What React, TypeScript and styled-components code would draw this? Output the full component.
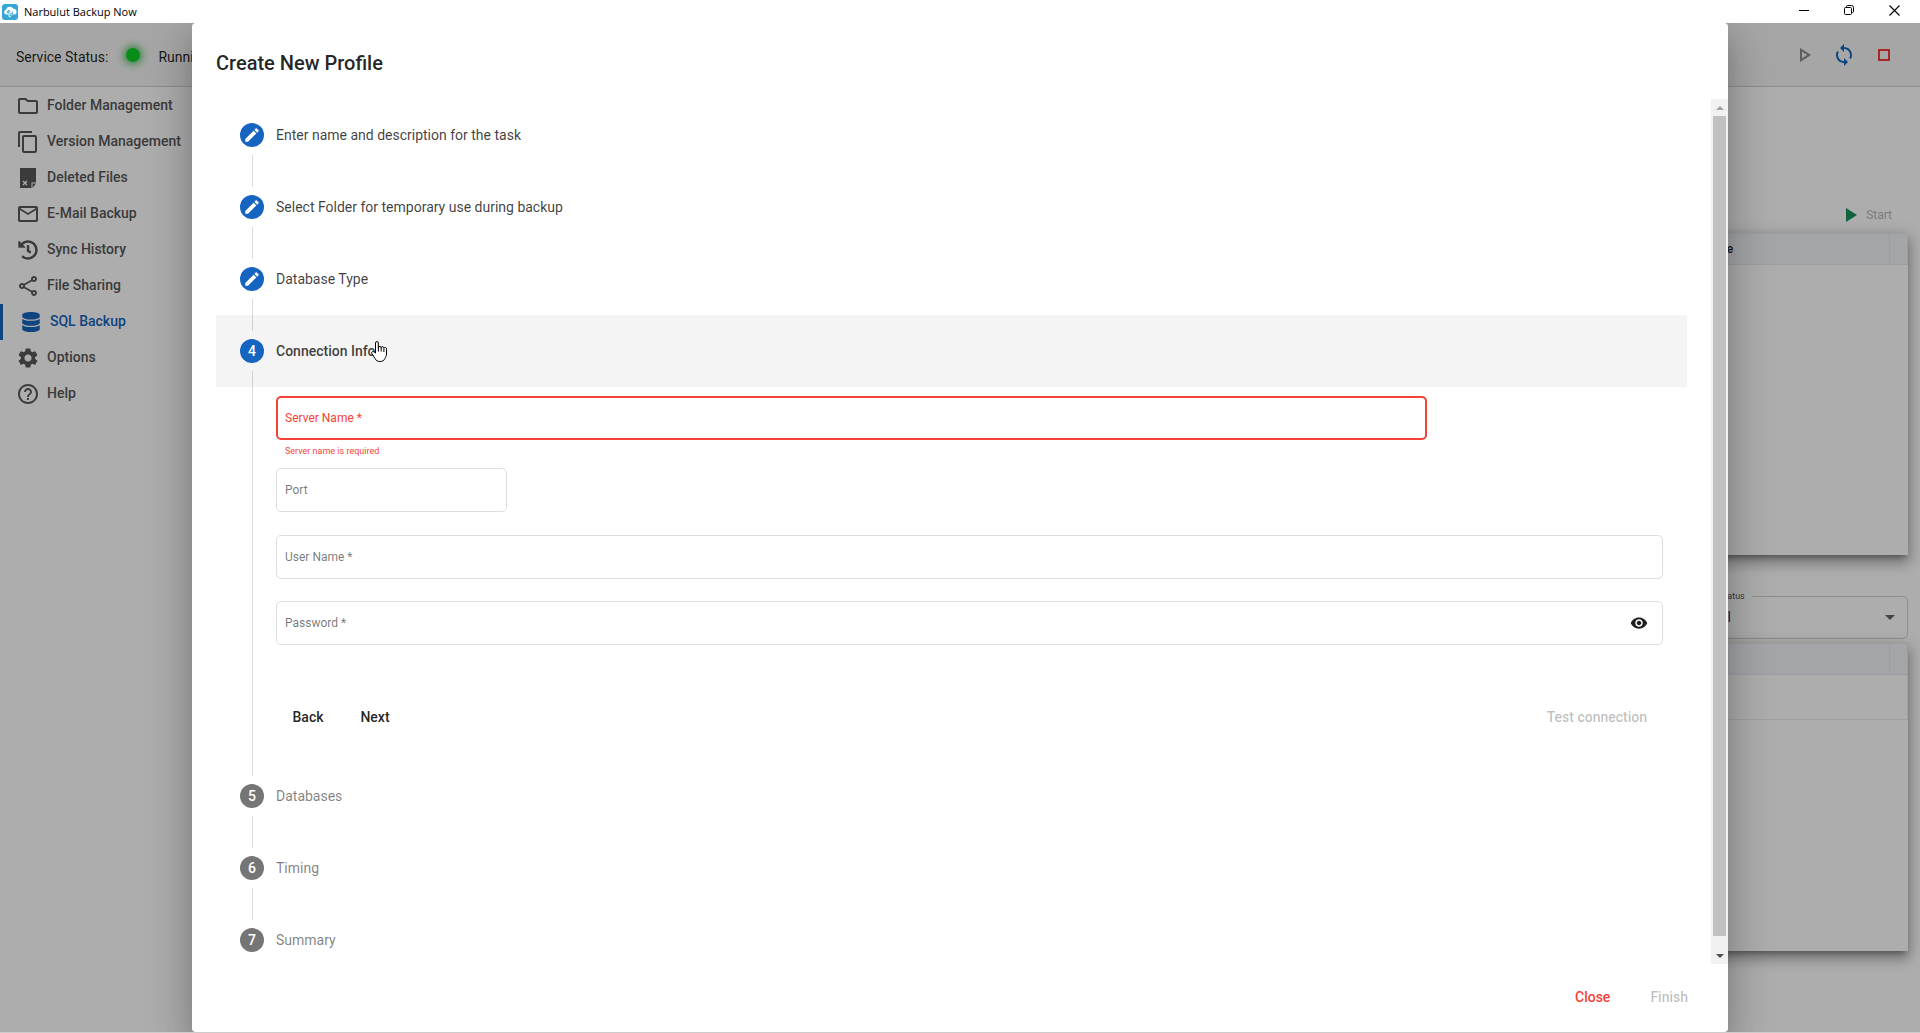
import React from "react";
import styled, { createGlobalStyle, css } from "styled-components";
import {
  MdContentCopy,
  MdEdit,
  MdHelpOutline,
  MdMailOutline,
  MdOutlineFolder,
  MdOutlinePlayArrow,
  MdOutlineShare,
  MdOutlineStop,
  MdPlayArrow,
  MdSettings,
  MdSync,
  MdVisibility,
} from "react-icons/md";
import { FaDatabase, FaHistory } from "react-icons/fa";

const blue = "#1565c0";
const red = "#f44336";

const GlobalStyle = createGlobalStyle`
  *, *::before, *::after { box-sizing: border-box; }
  body {
    margin: 0;
    font-family: Roboto, "Liberation Sans", sans-serif;
    font-size: 14px;
    line-height: 20px;
    color: rgba(0, 0, 0, 0.87);
    background: #fff;
  }
  button, input, select { font: inherit; color: inherit; }
  button { border: 0; background: none; padding: 0; }
  svg { display: block; flex: none; }
`;

/* ---------- window ---------- */

const Window = styled.div`
  height: 100vh;
  display: flex;
  flex-direction: column;
  overflow: hidden;
  border-bottom: 1px solid #ccc;
`;

const TitleBar = styled.header`
  height: 23px;
  flex: none;
  display: flex;
  align-items: center;
  justify-content: space-between;
  padding: 0 20px 0 2px;
  color: #000;
`;

const AppName = styled.div`
  display: flex;
  align-items: center;
  gap: 6px;
  font: 11px/16px "Open Sans", "Noto Sans", sans-serif;
`;

const WindowButtons = styled.div`
  display: flex;
  gap: 34px;
  padding-bottom: 3px;
`;

const WindowButton = styled.button`
  display: flex;
`;

const Workspace = styled.div`
  position: relative;
  flex: 1;
  min-height: 0;
  display: flex;
  flex-direction: column;
`;

/* ---------- app behind the dialog ---------- */

const StatusBar = styled.div`
  height: 64px;
  flex: none;
  display: flex;
  align-items: center;
  justify-content: space-between;
  padding: 0 24px 0 16px;
  background: #f5f5f5;
  border-bottom: 1px solid #d0d0d0;
`;

const ServiceStatus = styled.div`
  display: flex;
  align-items: center;
  gap: 18px;
  padding-top: 4px;
`;

const StatusDot = styled.span`
  width: 14px;
  height: 14px;
  margin-bottom: 4px;
  border-radius: 50%;
  background: #0cd024;
  box-shadow: 0 0 8px 2px #3fb850;
`;

const ServiceActions = styled.div`
  display: flex;
  gap: 16px;
`;

const ServiceButton = styled.button<{ $color: string }>`
  display: flex;
  color: ${(p) => p.$color};
`;

const Body = styled.div`
  flex: 1;
  min-height: 0;
  display: flex;
`;

const Sidebar = styled.nav`
  width: 200px;
  flex: none;
  padding-top: 1px;
`;

const NavItem = styled.a<{ $active?: boolean }>`
  height: 36px;
  display: flex;
  align-items: center;
  gap: 7px;
  padding-left: 16px;
  color: #585858;
  font-weight: 500;
  text-decoration: none;
  ${(p) =>
    p.$active &&
    css`
      color: ${blue};
      border-left: 3px solid ${blue};
    `}
`;

const NavIcon = styled.span`
  width: 24px;
  display: flex;
  justify-content: center;
`;

const NavLabel = styled.span`
  padding-bottom: 2px;
`;

const Main = styled.main`
  flex: 1;
  min-width: 0;
  display: flex;
  flex-direction: column;
  padding: 116px 12px 81px;
`;

const Actions = styled.div`
  display: flex;
  justify-content: flex-end;
  padding: 0 16px 6px 0;
`;

const StartButton = styled.button`
  height: 24px;
  display: flex;
  align-items: center;
  gap: 4px;
  color: #b8b8b8;
  font-size: 12px;
  svg { color: #18925e; }
`;

const Panel = styled.section<{ $grow: number }>`
  flex: ${(p) => p.$grow} 1 0;
  box-shadow: 0 5px 5px -3px rgba(0, 0, 0, 0.3), 0 8px 12px 1px rgba(0, 0, 0, 0.22),
    0 3px 14px 2px rgba(0, 0, 0, 0.16);
  background: #fff;
`;

const PanelTable = styled.table`
  width: 100%;
  border-collapse: collapse;
  table-layout: fixed;
  font-size: 12px;
  th {
    height: 31px;
    padding: 0 8px;
    text-align: left;
    font-weight: 500;
    background: #f0f3fa;
    border: 1px solid #e6e8ee;
  }
  td {
    height: 45px;
    border: 1px solid #ececec;
  }
  col:nth-child(2) { width: 193px; }
  col:nth-child(3) { width: 18px; }
`;

const StatusFilter = styled.fieldset`
  width: 206px;
  height: 48px;
  margin: 36px 0 4px auto;
  padding: 6px 12px 0;
  display: flex;
  align-items: center;
  border: 1px solid #d2d2d2;
  border-radius: 5px;
  legend {
    padding: 0 7px 0 4px;
    font-size: 9px;
    line-height: 10px;
    color: #555;
  }
  select {
    flex: 1;
    border: 0;
    appearance: none;
    background: none;
    color: #26408c;
    padding: 0;
  }
`;

/* ---------- dialog ---------- */

const Backdrop = styled.div`
  position: absolute;
  inset: 0;
  display: flex;
  justify-content: center;
  overflow: hidden;
  background: rgba(0, 0, 0, 0.32);
`;

const Dialog = styled.section`
  width: 80%;
  height: 100%;
  display: flex;
  flex-direction: column;
  border-radius: 4px;
  background: #fff;
  box-shadow: 0 11px 15px -7px rgba(0, 0, 0, 0.2), 0 24px 38px 3px rgba(0, 0, 0, 0.14),
    0 9px 46px 8px rgba(0, 0, 0, 0.12);
`;

const DialogTitle = styled.h1`
  margin: 0;
  padding: 24px 24px 20px;
  font-size: 20px;
  line-height: 32px;
  font-weight: 500;
`;

const DialogContent = styled.div`
  flex: 1;
  min-height: 0;
  display: flex;
`;

const Stepper = styled.div`
  flex: 1;
  min-width: 0;
  overflow-y: auto;
  scrollbar-width: none;
  padding: 0 24px;
`;

const ScrollTrack = styled.div`
  width: 17px;
  flex: none;
  display: flex;
  flex-direction: column;
  align-items: center;
  background: #f1f1f1;
`;

const ScrollArrow = styled.button`
  width: 17px;
  height: 17px;
  display: grid;
  place-items: center;
`;

const ScrollThumb = styled.div`
  width: 13px;
  flex: 1;
  margin-bottom: 11px;
  background: #c1c1c1;
`;

const StepHeader = styled.button<{ $state: StepState }>`
  width: 100%;
  height: 72px;
  display: flex;
  align-items: center;
  gap: 12px;
  padding: 0 24px;
  text-align: left;
  color: ${(p) => (p.$state === "todo" ? "rgba(0,0,0,0.5)" : "rgba(0,0,0,0.76)")};
  ${(p) =>
    p.$state === "current" &&
    css`
      font-weight: 500;
      background: #f4f4f4;
    `}
`;

const StepBadge = styled.span<{ $state: StepState }>`
  width: 24px;
  height: 24px;
  display: grid;
  place-items: center;
  border-radius: 50%;
  color: #fff;
  font-weight: 500;
  background: ${(p) => (p.$state === "todo" ? "#757575" : blue)};
`;

const StepBody = styled.div`
  position: relative;
  margin-left: 36px;
  &::before {
    content: "";
    position: absolute;
    top: -16px;
    bottom: -16px;
    left: 0;
    border-left: 1px solid rgba(0, 0, 0, 0.14);
  }
`;

const ConnectionForm = styled.form`
  padding: 9px 24px 25px;
`;

const Field = styled.div<{ $width?: string; $invalid?: boolean; $gap: number }>`
  width: ${(p) => p.$width ?? "100%"};
  height: 44px;
  margin-bottom: ${(p) => p.$gap}px;
  display: flex;
  align-items: center;
  gap: 8px;
  padding: 0 14px 0 8px;
  font-size: 12px;
  color: ${(p) => (p.$invalid ? red : "rgba(0,0,0,0.54)")};
  border: 1px solid #dedede;
  border-radius: 5px;
  ${(p) =>
    p.$invalid &&
    css`
      padding: 0 14px 0 7px;
      border: 2px solid ${red};
    `}
  input {
    flex: 1;
    min-width: 0;
    border: 0;
    outline: 0;
    background: none;
  }
`;

const FieldError = styled.p`
  margin: 0;
  height: 28px;
  padding: 1px 9px;
  font-size: 9px;
  color: ${red};
`;

const EyeButton = styled.button`
  display: flex;
  color: #1f1f1f;
`;

const FormActions = styled.div`
  display: flex;
  gap: 3px;
  padding-top: 32px;
`;

const TextButton = styled.button<{ $color?: string; $end?: boolean }>`
  height: 36px;
  min-width: 64px;
  padding: 0 16px;
  font-weight: 500;
  border-radius: 4px;
  color: ${(p) => p.$color ?? "rgba(0,0,0,0.87)"};
  margin-left: ${(p) => (p.$end ? "auto" : "0")};
  &:disabled { color: rgba(0, 0, 0, 0.26); }
`;

const DialogActions = styled.footer`
  height: 68px;
  flex: none;
  display: flex;
  align-items: center;
  justify-content: flex-end;
  gap: 8px;
  padding: 0 24px 2px;
`;

const PointerCursor = styled.svg`
  position: absolute;
  left: 371px;
  top: 318px;
`;

/* ---------- drawings ---------- */

const Logo = () => (
  <svg width="16" height="16" viewBox="0 0 16 16" aria-hidden="true">
    <rect width="16" height="16" rx="3" fill="#35a6d6" />
    <path d="M4.400 10.600a2.600 2.600 0 0 1-.3-5.100 3.900 3.900 0 0 1 7.200-.8 2.900 2.900 0 0 1 .5 5.900z" fill="#fff" />
    <path d="M5.200 9.200V8l1.600-1.700L8.400 8M6.800 6.500v3.200M8 9.800h2.400V7.800" fill="none" stroke="#35a6d6" />
    <path d="M7 10.500v2.200h1.800M9.200 10.500v1" fill="none" stroke="#fff" />
  </svg>
);

const DeletedFileIcon = () => (
  <svg width="16" height="20" viewBox="0 0 16 20" aria-hidden="true">
    <path d="M0 0h16v14.500h-4.500V20H0z" fill="currentColor" />
    <path d="M12.500 20v-4.500H16z" fill="currentColor" />
    <path d="M3 13l4 4M7 13l-4 4" stroke="#fff" strokeWidth="1.300" />
  </svg>
);

const MinimizeIcon = () => (
  <svg width="11" height="11" viewBox="0 0 11 11"><path d="M0 5.5h10" stroke="#000" /></svg>
);
const RestoreIcon = () => (
  <svg width="11" height="11" viewBox="0 0 11 11" fill="none" stroke="#000">
    <rect x=".5" y="2.5" width="7" height="7" rx="1" />
    <path d="M2.5 2V1.5a1 1 0 0 1 1-1h4a2 2 0 0 1 2 2v4a1 1 0 0 1-1 1H8" />
  </svg>
);
const CloseIcon = () => (
  <svg width="11" height="11" viewBox="0 0 11 11"><path d="M.5.5l10 10M10.5.5l-10 10" stroke="#000" strokeWidth="1.1" /></svg>
);

/* ---------- data ---------- */

type StepState = "done" | "current" | "todo";

const navItems = [
  { label: "Folder Management", icon: <MdOutlineFolder size={24} /> },
  { label: "Version Management", icon: <MdContentCopy size={24} /> },
  { label: "Deleted Files", icon: <DeletedFileIcon /> },
  { label: "E-Mail Backup", icon: <MdMailOutline size={24} /> },
  { label: "Sync History", icon: <FaHistory size={20} /> },
  { label: "File Sharing", icon: <MdOutlineShare size={24} /> },
  { label: "SQL Backup", icon: <FaDatabase size={20} />, active: true },
  { label: "Options", icon: <MdSettings size={24} /> },
  { label: "Help", icon: <MdHelpOutline size={24} /> },
];

const steps: { label: string; state: StepState }[] = [
  { label: "Enter name and description for the task", state: "done" },
  { label: "Select Folder for temporary use during backup", state: "done" },
  { label: "Database Type", state: "done" },
  { label: "Connection Info", state: "current" },
  { label: "Databases", state: "todo" },
  { label: "Timing", state: "todo" },
  { label: "Summary", state: "todo" },
];

const ConnectionStep = () => (
  <ConnectionForm>
    <Field $width="83%" $invalid $gap={0}>
      <label htmlFor="server">Server Name *</label>
      <input id="server" />
    </Field>
    <FieldError>Server name is required</FieldError>
    <Field $width="231px" $gap={23}>
      <label htmlFor="port">Port</label>
      <input id="port" />
    </Field>
    <Field $gap={22}>
      <label htmlFor="user">User Name *</label>
      <input id="user" />
    </Field>
    <Field $gap={22}>
      <label htmlFor="password">Password *</label>
      <input id="password" type="password" />
      <EyeButton type="button" aria-label="Show password">
        <MdVisibility size={18} />
      </EyeButton>
    </Field>
    <FormActions>
      <TextButton type="button">Back</TextButton>
      <TextButton type="button">Next</TextButton>
      <TextButton type="button" $end disabled>Test connection</TextButton>
    </FormActions>
  </ConnectionForm>
);

export default function App() {
  return (
    <>
      <GlobalStyle />
      <Window>
        <TitleBar>
          <AppName>
            <Logo />
            <span>Narbulut Backup Now</span>
          </AppName>
          <WindowButtons>
            <WindowButton aria-label="Minimize"><MinimizeIcon /></WindowButton>
            <WindowButton aria-label="Restore"><RestoreIcon /></WindowButton>
            <WindowButton aria-label="Close window"><CloseIcon /></WindowButton>
          </WindowButtons>
        </TitleBar>
        <Workspace>
          <StatusBar>
            <ServiceStatus>
              <span>Service Status:</span>
              <StatusDot />
              <span>Running</span>
            </ServiceStatus>
            <ServiceActions>
              <ServiceButton $color="#8c8c8c" aria-label="Run"><MdOutlinePlayArrow size={24} /></ServiceButton>
              <ServiceButton $color={blue} aria-label="Sync"><MdSync size={24} /></ServiceButton>
              <ServiceButton $color="#f83a3a" aria-label="Stop"><MdOutlineStop size={24} /></ServiceButton>
            </ServiceActions>
          </StatusBar>
          <Body>
            <Sidebar>
              {navItems.map((item) => (
                <NavItem key={item.label} href="#" $active={item.active}>
                  <NavIcon>{item.icon}</NavIcon>
                  <NavLabel>{item.label}</NavLabel>
                </NavItem>
              ))}
            </Sidebar>
            <Main>
              <Actions>
                <StartButton><MdPlayArrow size={24} />Start</StartButton>
              </Actions>
              <Panel $grow={322}>
                <PanelTable>
                  <colgroup><col /><col /><col /></colgroup>
                  <thead><tr><th /><th>State</th><th /></tr></thead>
                </PanelTable>
              </Panel>
              <StatusFilter>
                <legend>Status</legend>
                <select aria-label="Status" defaultValue="All"><option>All</option></select>
                <svg width="10" height="5" viewBox="0 0 10 5"><path d="M0 0h10L5 5z" fill="#666" /></svg>
              </StatusFilter>
              <Panel $grow={308}>
                <PanelTable>
                  <colgroup><col /><col /><col /></colgroup>
                  <thead><tr><th /><th /><th /></tr></thead>
                  <tbody><tr><td colSpan={3} /></tr></tbody>
                </PanelTable>
              </Panel>
            </Main>
          </Body>
          <Backdrop>
            <Dialog role="dialog" aria-labelledby="dialog-title">
              <DialogTitle id="dialog-title">Create New Profile</DialogTitle>
              <DialogContent>
                <Stepper>
                  {steps.map((step, i) => (
                    <div key={step.label}>
                      <StepHeader $state={step.state}>
                        <StepBadge $state={step.state}>
                          {step.state === "done" ? <MdEdit size={18} /> : i + 1}
                        </StepBadge>
                        {step.label}
                      </StepHeader>
                      {i < steps.length - 1 && (
                        <StepBody>{step.state === "current" && <ConnectionStep />}</StepBody>
                      )}
                    </div>
                  ))}
                </Stepper>
                <ScrollTrack>
                  <ScrollArrow aria-label="Scroll up">
                    <svg width="8" height="4" viewBox="0 0 8 4"><path d="M0 4h8L4 0z" fill="#a3a3a3" /></svg>
                  </ScrollArrow>
                  <ScrollThumb />
                  <ScrollArrow aria-label="Scroll down">
                    <svg width="8" height="4" viewBox="0 0 8 4"><path d="M0 0h8L4 4z" fill="#505050" /></svg>
                  </ScrollArrow>
                </ScrollTrack>
              </DialogContent>
              <DialogActions>
                <TextButton $color={red}>Close</TextButton>
                <TextButton disabled>Finish</TextButton>
              </DialogActions>
            </Dialog>
            <PointerCursor width="17" height="22" viewBox="0 0 17 22" aria-hidden="true">
              <path
                d="M4.500 12V2a1.400 1.400 0 0 1 2.800 0V6.500a1.300 1.300 0 0 1 2.800.4 1.300 1.300 0 0 1 2.800.6 1.300 1.300 0 0 1 2.600.9V13c0 2-1 3-1.500 4.500-1 2-2.500 3-5 3s-4-1-5-3L.8 12.500C0 11 2 9.800 3.200 11z"
                fill="#fff"
                stroke="#000"
                strokeLinejoin="round"
              />
              <path d="M7.400 6v4.500M10.200 7v3.500M12.900 8v3" stroke="#000" />
            </PointerCursor>
          </Backdrop>
        </Workspace>
      </Window>
    </>
  );
}
